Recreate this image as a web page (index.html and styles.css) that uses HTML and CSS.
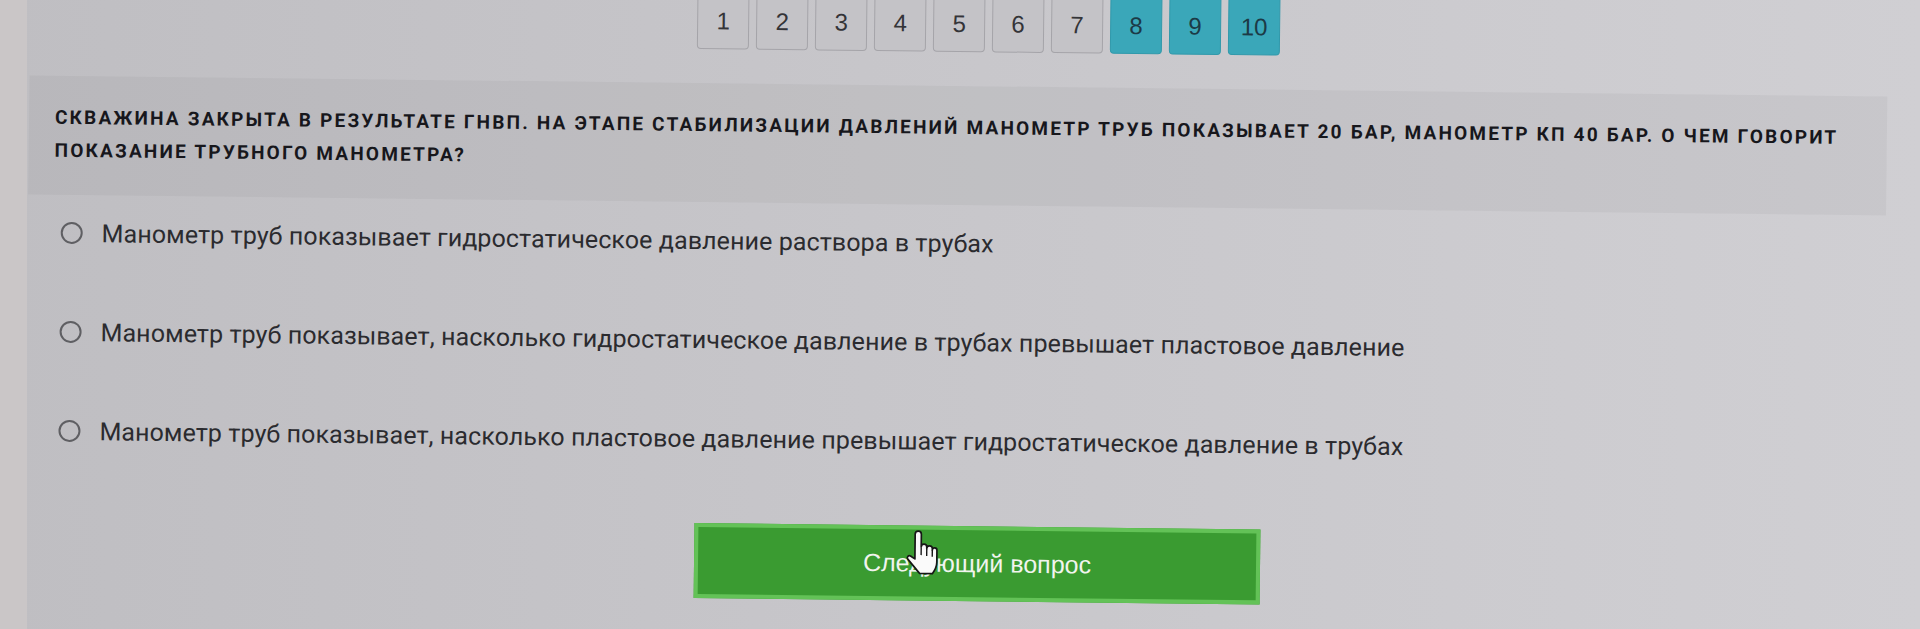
FILE: index.html
```html
<!DOCTYPE html>
<html lang="ru">
<head>
    <meta charset="UTF-8">
    <title>Тест ГНВП</title>
    <link rel="stylesheet" href="styles.css">
</head>
<body>
<div class="page">
    <!-- номера вопросов -->
    <nav class="pager">
        <span class="pager-item">1</span>
        <span class="pager-item">2</span>
        <span class="pager-item">3</span>
        <span class="pager-item">4</span>
        <span class="pager-item">5</span>
        <span class="pager-item">6</span>
        <span class="pager-item">7</span>
        <span class="pager-item pager-item--open">8</span>
        <span class="pager-item pager-item--open">9</span>
        <span class="pager-item pager-item--open">10</span>
    </nav>

    <section class="question">
        <p class="question-text">Скважина закрыта в результате ГНВП. На этапе стабилизации давлений манометр труб показывает 20 бар, манометр КП 40 бар. О чем говорит показание трубного манометра?</p>
    </section>

    <form class="answers">
        <label class="answer">
            <input type="radio" name="answer" value="1">
            <span>Манометр труб показывает гидростатическое давление раствора в трубах</span>
        </label>
        <label class="answer">
            <input type="radio" name="answer" value="2">
            <span>Манометр труб показывает, насколько гидростатическое давление в трубах превышает пластовое давление</span>
        </label>
        <label class="answer">
            <input type="radio" name="answer" value="3">
            <span>Манометр труб показывает, насколько пластовое давление превышает гидростатическое давление в трубах</span>
        </label>
    </form>

    <div class="actions">
        <button class="next-btn" type="button">
            Следующий вопрос
            <!-- курсор-рука поверх кнопки -->
            <svg class="pointer" viewBox="0 0 22 31" width="34" height="48">
                <path d="M7 3a2 2 0 0 1 4 0v8.2a1.8 1.8 0 0 1 3.6 0v1a1.8 1.8 0 0 1 3.6 0v1a1.5 1.5 0 0 1 3 0V21c0 3-1.2 5.2-2.8 7.4H10.2C8.4 26.2 5.6 23 2.4 19.2c-.9-1.1.3-2.8 1.7-2.1L7 19z"
                      fill="#fafafa" stroke="#161616" stroke-width="1.1" stroke-linejoin="round"/>
                <path d="M11 11.5v5M14.6 12.5v4.5M18.2 13.5v4" stroke="#161616" stroke-width="0.9" fill="none"/>
            </svg>
        </button>
    </div>
</div>
</body>
</html>
```

FILE: styles.css
```css
body {
    margin: 0;
    height: 629px;
    overflow: hidden;
    background:
        linear-gradient(90deg, #cac6c7 27px, transparent 27px),
        linear-gradient(90deg, #bfbec2 0%, #c7c6ca 45%, #d0cfd3 100%);
    font-family: Roboto, "Liberation Sans", sans-serif;
    color: #2a2a2e;
}
/* снимок экрана чуть повёрнут */
.page {
    width: 1920px;
    transform: rotate(0.65deg);
    transform-origin: 960px 314px;
}
.pager {
    display: flex;
    gap: 7px;
    padding-left: 694px;
    margin-top: -12px;
}
.pager-item {
    width: 52px;
    height: 64px;
    box-sizing: border-box;
    padding-top: 8px;
    display: flex;
    align-items: center;
    justify-content: center;
    border: 1px solid #a5a4a9;
    border-radius: 4px;
    background-color: #c4c3c7;
    font-family: "Liberation Sans", Arial, sans-serif;
    font-size: 24px;
    color: #343438;
}
.pager-item--open {
    background-color: #3aa7b9;
    border-color: #3199ab;
    color: #1c3a46;
}
.question {
    margin: 34px 0 0 27px;
    width: 1858px;
    box-sizing: border-box;
    padding: 25px 26px 28px;
    background-color: rgba(0, 0, 0, 0.035);
}
.question-text {
    margin: 0;
    text-transform: uppercase;
    font-weight: 700;
    font-size: 19px;
    line-height: 33px;
    letter-spacing: 2.2px;
    color: #17171c;
}
.answers {
    display: flex;
    flex-direction: column;
    gap: 69px;
    margin: 23px 0 0 60px;
}
.answer {
    display: flex;
    align-items: center;
    gap: 19px;
    height: 30px;
    font-size: 25px;
    letter-spacing: 0.1px;
    color: #2b2b2f;
    cursor: pointer;
}
.answer input {
    appearance: none;
    margin: 0;
    width: 22px;
    height: 22px;
    border: 2px solid #5f5f63;
    border-radius: 50%;
    background: transparent;
}
.actions {
    margin: 70px 0 0 697px;
}
.next-btn {
    position: relative;
    width: 566px;
    height: 75px;
    border: 4px solid #63c257;
    background-color: #3a9b31;
    color: #f1f4ee;
    font-family: "Liberation Sans", Arial, sans-serif;
    font-size: 25px;
    cursor: pointer;
}
.pointer {
    position: absolute;
    left: 206px;
    top: 0;
}
```
